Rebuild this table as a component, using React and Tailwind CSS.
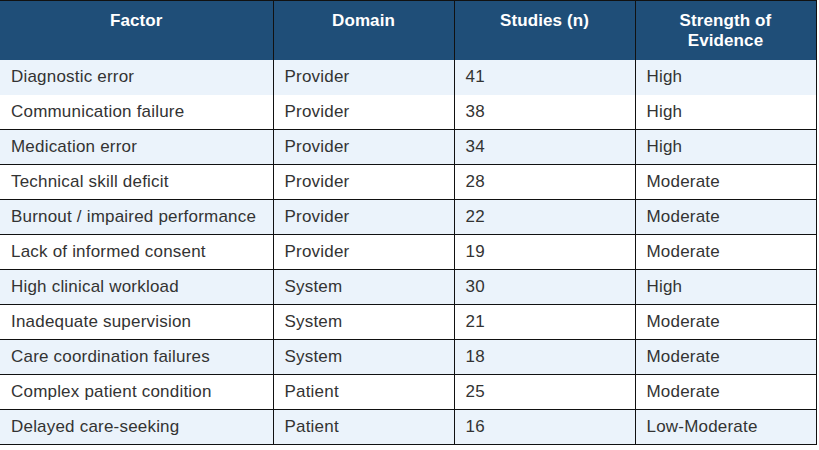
const ROWS = [
  ['Diagnostic error', 'Provider', '41', 'High'],
  ['Communication failure', 'Provider', '38', 'High'],
  ['Medication error', 'Provider', '34', 'High'],
  ['Technical skill deficit', 'Provider', '28', 'Moderate'],
  ['Burnout / impaired performance', 'Provider', '22', 'Moderate'],
  ['Lack of informed consent', 'Provider', '19', 'Moderate'],
  ['High clinical workload', 'System', '30', 'High'],
  ['Inadequate supervision', 'System', '21', 'Moderate'],
  ['Care coordination failures', 'System', '18', 'Moderate'],
  ['Complex patient condition', 'Patient', '25', 'Moderate'],
  ['Delayed care-seeking', 'Patient', '16', 'Low-Moderate'],
];

const HEAD = ['Factor', 'Domain', 'Studies (n)', 'Strength of Evidence'];

export default function App() {
  return (
    <div className="min-h-[450px] bg-white" style={{ fontFamily: '"Liberation Sans", Arial, sans-serif' }}>
      <table className="w-[816px] table-fixed border-collapse border-t border-[#111]">
        <colgroup>
          <col className="w-[273px]" />
          <col className="w-[181px]" />
          <col className="w-[181px]" />
          <col className="w-[181px]" />
        </colgroup>
        <thead>
          <tr className="h-[59px] bg-[#1f4e78]">
            {HEAD.map((h) => (
              <th key={h} className="border-r border-[#111] px-6 pt-[10px] align-top text-center text-[17px] font-bold leading-[20px] tracking-[0.1px] text-white">
                {h}
              </th>
            ))}
          </tr>
        </thead>
        <tbody>
          {ROWS.map((r, i) => (
            <tr key={r[0]} className={`h-[35px] ${i % 2 === 0 ? 'bg-[#ebf3fb]' : 'bg-white'} ${i === 0 ? '' : 'border-b border-[#111]'}`}>
              {r.map((c, j) => (
                <td key={j} className="border-r border-[#111] px-[11px] align-middle text-[17px] leading-[20px] tracking-[0.2px] text-[#333]">
                  {c}
                </td>
              ))}
            </tr>
          ))}
        </tbody>
      </table>
    </div>
  );
}
